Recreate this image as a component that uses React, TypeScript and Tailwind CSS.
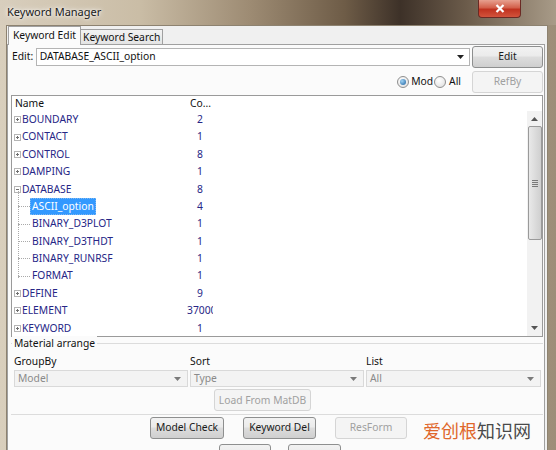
import React from 'react';

type Node = {
  name: string;
  count: string;
  kind: 'closed' | 'open' | 'child';
  selected?: boolean;
};

const nodes: Node[] = [
  { name: 'BOUNDARY', count: '2', kind: 'closed' },
  { name: 'CONTACT', count: '1', kind: 'closed' },
  { name: 'CONTROL', count: '8', kind: 'closed' },
  { name: 'DAMPING', count: '1', kind: 'closed' },
  { name: 'DATABASE', count: '8', kind: 'open' },
  { name: 'ASCII_option', count: '4', kind: 'child', selected: true },
  { name: 'BINARY_D3PLOT', count: '1', kind: 'child' },
  { name: 'BINARY_D3THDT', count: '1', kind: 'child' },
  { name: 'BINARY_RUNRSF', count: '1', kind: 'child' },
  { name: 'FORMAT', count: '1', kind: 'child' },
  { name: 'DEFINE', count: '9', kind: 'closed' },
  { name: 'ELEMENT', count: '37000', kind: 'closed' },
  { name: 'KEYWORD', count: '1', kind: 'closed' },
];

const font = { fontFamily: '"Noto Sans", "Open Sans", sans-serif' };

const Expander = ({ open }: { open: boolean }) => (
  <svg width="7" height="7" viewBox="0 0 7 7" className="shrink-0">
    <rect x="0.5" y="0.5" width="6" height="6" fill="#fff" stroke="#b5b5b5" />
    <path d="M2 3.5h3" stroke="#707070" />
    {!open && <path d="M3.5 2v3" stroke="#707070" />}
  </svg>
);

const Button = ({ label, disabled, className = '' }: { label: string; disabled?: boolean; className?: string }) => (
  <div
    className={`flex shrink-0 items-center justify-center whitespace-nowrap rounded-[3px] border text-[10.3px] ${
      disabled
        ? 'border-[#d5d5d5] bg-[#f4f4f4] text-[#a0a0a0]'
        : 'border-[#8e8f8f] bg-[linear-gradient(#f2f2f2,#ebebeb_45%,#dddddd_50%,#cfcfcf)] text-[#1a1a1a]'
    } ${className}`}
  >
    {label}
  </div>
);

const Combo = ({ value, className = '' }: { value: string; className?: string }) => (
  <div
    className={`flex h-[17px] items-center justify-between border border-[#d9d9d9] bg-[#f3f3f3] pl-[3px] pr-[6px] text-[10.3px] text-[#8a8a8a] ${className}`}
  >
    <span>{value}</span>
    <svg width="7" height="4" viewBox="0 0 7 4">
      <path d="M0 0h7L3.5 4z" fill="#7a7a7a" />
    </svg>
  </div>
);

const Radio = ({ checked }: { checked?: boolean }) => (
  <span className="flex h-[12px] w-[12px] items-center justify-center rounded-full border border-[#8f8f8f] bg-[radial-gradient(circle_at_40%_35%,#ffffff,#dcdcdc)]">
    {checked && <span className="h-[6px] w-[6px] rounded-full bg-[radial-gradient(circle_at_35%_35%,#9fd3f5,#1b5f9e)]" />}
  </span>
);

export default function App() {
  return (
    <div
      className="relative flex h-[450px] w-[556px] flex-col overflow-hidden bg-[linear-gradient(90deg,#d9cfbd,#c4b59d_40%,#b4a68f_70%,#9c8e79)]"
      style={font}
    >
      {/* title bar */}
      <div className="relative flex h-[25px] shrink-0 items-center bg-[linear-gradient(90deg,#d8cebd_0%,#cabda6_25%,#9d8b73_45%,#6e5c47_62%,#3d3128_72%,#6c5c4b_84%,#a89b88_100%)] pl-[7px]">
        <span className="text-[11px] text-[#1a1a1a] [text-shadow:0_0_6px_#fff,0_0_3px_#fff]">Keyword Manager</span>
        <div className="absolute left-[478px] top-0 flex h-[18px] w-[43px] items-center justify-center rounded-b-[4px] border border-t-0 border-[#6b2a24] bg-[linear-gradient(#e7a08f,#d3604b_45%,#c0321f_55%,#d3533c)]">
          <svg width="10" height="9" viewBox="0 0 10 9">
            <path d="M1.5 1l7 7M8.5 1l-7 7" stroke="#fff" strokeWidth="2.2" />
          </svg>
        </div>
      </div>

      {/* client area */}
      <div className="ml-[6px] mr-[8px] flex flex-1 flex-col border border-[#8d8270] bg-[#f0f0f0]">
        {/* tabs */}
        <div className="flex h-[19px] items-end pl-[1px]">
          <div className="relative z-10 flex h-[19px] items-center border border-b-0 border-[#a0a0a0] bg-[#fbfbfb] px-[4px] text-[10.3px] text-[#111]">
            Keyword Edit
          </div>
          <div className="flex h-[16px] items-center border border-b-0 border-l-0 border-[#a0a0a0] bg-[linear-gradient(#f2f2f2,#e3e3e3)] px-[2px] text-[10.3px] text-[#111]">
            Keyword Search
          </div>
        </div>

        <div className="-mt-px mr-[2px] flex flex-1 flex-col border border-[#a0a0a0] bg-[#fbfbfb] pl-[3px] pr-[1px]">
          {/* edit row */}
          <div className="mt-[1px] flex items-center">
            <span className="w-[24px] pl-[1px] text-[10.3px] text-[#111]">Edit:</span>
            <div className="ml-[1px] flex h-[18px] w-[439px] items-center justify-between border border-[#b4b4b4] bg-white pl-[3px] pr-[5px] text-[10.3px] text-[#111]">
              <span>DATABASE_ASCII_option</span>
              <svg width="7" height="4" viewBox="0 0 7 4">
                <path d="M0 0h7L3.5 4z" fill="#222" />
              </svg>
            </div>
            <Button label="Edit" className="ml-[2px] h-[22px] w-[71px]" />
          </div>

          {/* filter row */}
          <div className="mt-[3px] flex items-center justify-end">
            <Radio checked />
            <span className="ml-[2px] text-[10.3px] text-[#111]">Mod</span>
            <span className="ml-[1px]">
              <Radio />
            </span>
            <span className="ml-[3px] text-[10.3px] text-[#111]">All</span>
            <Button label="RefBy" disabled className="ml-[11px] h-[22px] w-[71px]" />
          </div>

          {/* keyword tree */}
          <div className="mt-[2px] flex h-[242px] flex-col overflow-hidden border border-[#9a9a9a] bg-white">
            <div className="flex h-[15px] shrink-0 items-center text-[10.3px] text-[#111]">
              <span className="w-[178px] pl-[3px]">Name</span>
              <span>Co...</span>
            </div>
            <div className="flex min-h-0 flex-1">
              <div className="relative flex-1 overflow-hidden">
                {/* vertical connector under DATABASE */}
                <div className="absolute left-[6px] top-[80px] h-[87px] border-l border-dotted border-[#a9a9a9]" />
                {nodes.map((n) => (
                  <div key={n.name} className="flex h-[17.4px] items-center text-[10.3px]">
                    <div className="flex w-[175px] items-center overflow-hidden pl-[2px]">
                      {n.kind === 'closed' || n.kind === 'open' ? (
                        <>
                          <Expander open={n.kind === 'open'} />
                          <span className="ml-[1px] text-[#262686]">{n.name}</span>
                        </>
                      ) : (
                        <>
                          <span className="ml-[4px] w-[12px] border-t border-dotted border-[#a9a9a9]" />
                          <span
                            className={
                              n.selected
                                ? 'border border-dotted border-[#7fb8f0] bg-[#3399ff] px-[1px] text-white'
                                : 'px-[2px] text-[#262686]'
                            }
                          >
                            {n.name}
                          </span>
                        </>
                      )}
                    </div>
                    <div className="w-[26px] overflow-hidden whitespace-nowrap text-center text-[#262686]">{n.count}</div>
                  </div>
                ))}
              </div>
              {/* scrollbar */}
              <div className="flex w-[15px] flex-col items-center bg-[#f2f2f2]">
                <svg width="7" height="4" viewBox="0 0 7 4" className="mt-[6px]">
                  <path d="M0 4h7L3.5 0z" fill="#555" />
                </svg>
                <div className="mt-[5px] flex h-[114px] w-[14px] items-center justify-center rounded-[2px] border border-[#9a9a9a] bg-[linear-gradient(90deg,#e9e9e9,#dcdcdc_50%,#cfcfcf)]">
                  <div className="flex flex-col gap-[1px]">
                    <span className="h-px w-[6px] bg-[#7a7a7a]" />
                    <span className="h-px w-[6px] bg-[#7a7a7a]" />
                    <span className="h-px w-[6px] bg-[#7a7a7a]" />
                    <span className="h-px w-[6px] bg-[#7a7a7a]" />
                  </div>
                </div>
                <div className="flex-1" />
                <svg width="7" height="4" viewBox="0 0 7 4" className="mb-[6px]">
                  <path d="M0 0h7L3.5 4z" fill="#555" />
                </svg>
              </div>
            </div>
          </div>

          {/* material arrange group */}
          <div className="relative mt-[6px] flex h-[72px] flex-col border-t border-b border-[#dcdcdc] pl-[3px] pr-[2px]">
            <span className="absolute -top-[8px] left-[1px] bg-[#fbfbfb] px-[2px] text-[10.3px] leading-[14px] text-[#111]">
              Material arrange
            </span>
            <div className="mt-[10px] flex text-[10.3px] text-[#111]">
              <span className="w-[176px]">GroupBy</span>
              <span className="w-[176px]">Sort</span>
              <span>List</span>
            </div>
            <div className="mt-[1px] flex gap-[2px]">
              <Combo value="Model" className="w-[174px]" />
              <Combo value="Type" className="w-[174px]" />
              <Combo value="All" className="w-[175px]" />
            </div>
            <div className="mt-[2px] flex justify-center pr-[30px]">
              <Button label="Load From MatDB" disabled className="h-[22px] w-[97px]" />
            </div>
          </div>

          {/* actions */}
          <div className="relative mt-[2px] flex h-[22px] items-start pl-[139px]">
            <Button label="Model Check" className="h-[22px] w-[74px]" />
            <Button label="Keyword Del" className="ml-[19px] h-[22px] w-[73px]" />
            <Button label="ResForm" disabled className="ml-[19px] h-[22px] w-[72px]" />
            <span
              className="ml-[16px] mt-[4px] whitespace-nowrap text-[18px] leading-none"
              style={{ fontFamily: '"Noto Sans CJK SC", sans-serif' }}
            >
              <span className="text-[#e0672b]">爱创根</span>
              <span className="text-[#4a4a4a]">知识网</span>
            </span>
          </div>
          <div className="mt-[5px] flex pl-[208px]">
            <Button label="ExpandAll" className="h-[22px] w-[52px]" />
            <Button label="CollapseAll" className="ml-[17px] h-[22px] w-[53px]" />
          </div>
        </div>
      </div>
    </div>
  );
}
